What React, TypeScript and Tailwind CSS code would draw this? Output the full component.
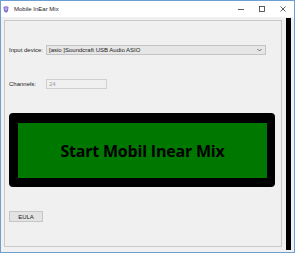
export default function App() {
  return (
    <div className="w-[295px] h-[253px] flex flex-col border border-[#6f9fd2] bg-white font-['Liberation_Sans',Arial,sans-serif] overflow-hidden">
      {/* title bar */}
      <div className="h-[16px] shrink-0 flex items-center bg-white">
        <svg width="6" height="8" viewBox="0 0 6 8" className="ml-[2px] mt-[1px]">
          <path d="M0.5 1 Q3 -0.5 5.5 1 L5 5 Q3 8 1 5 Z" fill="#7a6bc9" />
          <path d="M1.5 1.5 Q3 0.8 4.5 1.5 L4.2 4 Q3 5.5 1.8 4 Z" fill="#b7a9ee" />
        </svg>
        <span className="ml-[5px] text-[6px] text-[#222] leading-none">Mobile InEar Mix</span>
        <div className="ml-auto flex items-center h-full">
          <div className="w-[21px] h-full flex items-center justify-center">
            <svg width="6" height="6" viewBox="0 0 6 6">
              <line x1="0" y1="3.5" x2="6" y2="3.5" stroke="#333" strokeWidth="0.8" />
            </svg>
          </div>
          <div className="w-[21px] h-full flex items-center justify-center">
            <svg width="6" height="6" viewBox="0 0 6 6">
              <rect x="0.5" y="0.5" width="5" height="5" fill="none" stroke="#333" strokeWidth="0.8" />
            </svg>
          </div>
          <div className="w-[21px] h-full flex items-center justify-center mr-[1px]">
            <svg width="6" height="6" viewBox="0 0 6 6">
              <path d="M0.5 0.5 L5.5 5.5 M5.5 0.5 L0.5 5.5" stroke="#333" strokeWidth="0.8" />
            </svg>
          </div>
        </div>
      </div>

      {/* body */}
      <div className="flex-1 flex bg-[#f0f0f0] pl-[3px] pt-[1px] pb-[2px] pr-[3px]">
        <div className="flex-1 flex flex-col border border-[#c9c9c9] bg-[#f0f0f0] mt-[2px] mb-[3px] pl-[4px] pt-[24px]">
          <div className="flex items-center h-[10px]">
            <span className="w-[37px] text-[6px] text-[#222] leading-none">Input device:</span>
            <div className="w-[220px] h-[10px] border border-[#c4c4c4] bg-[#e6e6e6] flex items-center pl-[2px] pr-[3px]">
              <span className="text-[6px] text-[#222] leading-none">[asio ]Soundcraft USB Audio ASIO</span>
              <svg width="5" height="4" viewBox="0 0 5 4" className="ml-auto">
                <path d="M0.5 1 L2.5 3 L4.5 1" fill="none" stroke="#555" strokeWidth="0.8" />
              </svg>
            </div>
          </div>

          <div className="flex items-center h-[10px] mt-[24px]">
            <span className="w-[37px] text-[6px] text-[#222] leading-none">Channels:</span>
            <div className="w-[61px] h-[10px] border border-[#d0d0d0] bg-[#f0f0f0] flex items-center pl-[2px]">
              <span className="text-[6px] text-[#9a9a9a] leading-none">24</span>
            </div>
          </div>

          <div className="mt-[24px] w-[266px] h-[74px] bg-black rounded-[4px] pt-[10px] pb-[9px] pl-[9px] pr-[8px]">
            <div className="w-full h-full bg-[#007800] flex items-center justify-center">
              <span className="text-[16px] font-bold text-black leading-none font-['Open_Sans',sans-serif] tracking-[-0.2px]">
                Start Mobil Inear Mix
              </span>
            </div>
          </div>

          <div className="mt-[24px] w-[34px] h-[11px] border border-[#c6c6c6] bg-[#e3e3e3] flex items-center justify-center">
            <span className="text-[6px] text-[#222] leading-none">EULA</span>
          </div>
        </div>
        <div className="w-[5px] bg-black ml-[4px]" />
      </div>
    </div>
  );
}
